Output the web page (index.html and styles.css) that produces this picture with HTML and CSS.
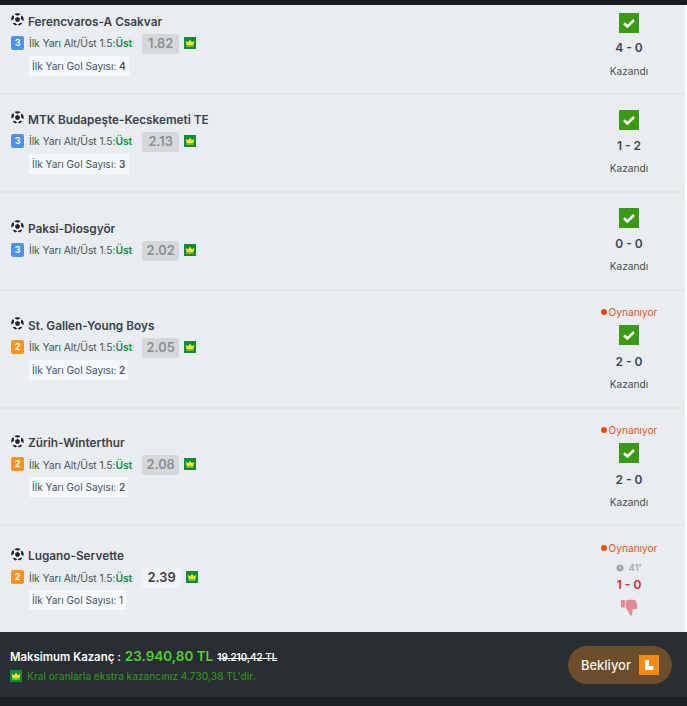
FILE: index.html
```html
<!DOCTYPE html>
<html lang="en">

<head>
  <meta charset="UTF-8">
  <meta name="viewport" content="width=device-width, initial-scale=1.0">
  <title>Kupon</title>
  <link rel="stylesheet" href="styles.css">
</head>

<body>
  <svg class="defs" width="0" height="0">
    <symbol id="ball" viewBox="0 0 24 24">
      <circle cx="12" cy="12" r="11.500" fill="#f4f4f4" />
      <path fill="#1d2024" d="M12 7l4.800 3.500-1.800 5.700H9l-1.800-5.700zM12 .5c-2.400 0-4.300.6-6 1.700L12 5l6-2.800C16.300 1.100 14.400.5 12 .5zM3.500 4.200C1.600 6.200.7 8.400.5 11l.8 3.200 4.400-3.900-.5-5.300zM20.500 4.200l-1.700 1.800-.5 5.300 4.400 3.900.8-3.200c-.2-2.600-1.100-4.800-3-6.800zM7 18l-4 .6c1.400 2.200 3.200 3.700 5.500 4.500l3-2.100zM17 18l-4.500 3 3 2.100c2.300-.8 4.100-2.300 5.500-4.500z" />
    </symbol>
    <symbol id="crown" viewBox="0 0 12 12">
      <rect width="12" height="12" fill="#0d8a3e" />
      <path fill="#f6e32b" d="M2.500 9.500h7v-1h-7zM2.500 8h7l.8-4.200-2.300 1.500L6 2.800 4 5.300 1.700 3.800z" />
    </symbol>
    <symbol id="check" viewBox="0 0 20 20">
      <rect width="20" height="20" fill="#3a9a14" />
      <path fill="none" stroke="#fff" stroke-width="2.600" d="M5 10.200l3.400 3.200L15 7" />
    </symbol>
  </svg>

  <div class="topbar"></div>

  <div class="list">

    <div class="row row-first">
      <div class="match">
        <div class="match-name"><svg class="ball"><use href="#ball" /></svg>Ferencvaros-A Csakvar</div>
        <div class="market">
          <span class="badge badge-blue">3</span>
          <span class="market-text">İlk Yarı Alt/Üst 1.5:<b class="pick">Üst</b></span>
          <span class="odds">1.82</span>
          <svg class="crown"><use href="#crown" /></svg>
        </div>
        <div class="goals">İlk Yarı Gol Sayısı: <b>4</b></div>
      </div>
      <div class="result">
        <svg class="check"><use href="#check" /></svg>
        <div class="score">4 - 0</div>
        <div class="status">Kazandı</div>
      </div>
    </div>

    <div class="row">
      <div class="match">
        <div class="match-name"><svg class="ball"><use href="#ball" /></svg>MTK Budapeşte-Kecskemeti TE</div>
        <div class="market">
          <span class="badge badge-blue">3</span>
          <span class="market-text">İlk Yarı Alt/Üst 1.5:<b class="pick">Üst</b></span>
          <span class="odds">2.13</span>
          <svg class="crown"><use href="#crown" /></svg>
        </div>
        <div class="goals">İlk Yarı Gol Sayısı: <b>3</b></div>
      </div>
      <div class="result">
        <svg class="check"><use href="#check" /></svg>
        <div class="score">1 - 2</div>
        <div class="status">Kazandı</div>
      </div>
    </div>

    <div class="row">
      <div class="match">
        <div class="match-name"><svg class="ball"><use href="#ball" /></svg>Paksi-Diosgyör</div>
        <div class="market">
          <span class="badge badge-blue">3</span>
          <span class="market-text">İlk Yarı Alt/Üst 1.5:<b class="pick">Üst</b></span>
          <span class="odds">2.02</span>
          <svg class="crown"><use href="#crown" /></svg>
        </div>
      </div>
      <div class="result">
        <svg class="check"><use href="#check" /></svg>
        <div class="score">0 - 0</div>
        <div class="status">Kazandı</div>
      </div>
    </div>

    <div class="row row-live">
      <div class="match">
        <div class="match-name"><svg class="ball"><use href="#ball" /></svg>St. Gallen-Young Boys</div>
        <div class="market">
          <span class="badge badge-orange">2</span>
          <span class="market-text">İlk Yarı Alt/Üst 1.5:<b class="pick">Üst</b></span>
          <span class="odds">2.05</span>
          <svg class="crown"><use href="#crown" /></svg>
        </div>
        <div class="goals">İlk Yarı Gol Sayısı: <b>2</b></div>
      </div>
      <div class="result">
        <div class="live"><span class="live-dot"></span>Oynanıyor</div>
        <svg class="check"><use href="#check" /></svg>
        <div class="score">2 - 0</div>
        <div class="status">Kazandı</div>
      </div>
    </div>

    <div class="row row-live row-short">
      <div class="match">
        <div class="match-name"><svg class="ball"><use href="#ball" /></svg>Zürih-Winterthur</div>
        <div class="market">
          <span class="badge badge-orange">2</span>
          <span class="market-text">İlk Yarı Alt/Üst 1.5:<b class="pick">Üst</b></span>
          <span class="odds">2.08</span>
          <svg class="crown"><use href="#crown" /></svg>
        </div>
        <div class="goals">İlk Yarı Gol Sayısı: <b>2</b></div>
      </div>
      <div class="result">
        <div class="live"><span class="live-dot"></span>Oynanıyor</div>
        <svg class="check"><use href="#check" /></svg>
        <div class="score">2 - 0</div>
        <div class="status">Kazandı</div>
      </div>
    </div>

    <div class="row row-last">
      <div class="match">
        <div class="match-name"><svg class="ball"><use href="#ball" /></svg>Lugano-Servette</div>
        <div class="market">
          <span class="badge badge-orange">2</span>
          <span class="market-text">İlk Yarı Alt/Üst 1.5:<b class="pick">Üst</b></span>
          <span class="odds odds-open">2.39</span>
          <svg class="crown"><use href="#crown" /></svg>
        </div>
        <div class="goals goals-open">İlk Yarı Gol Sayısı: 1</div>
      </div>
      <div class="result">
        <div class="live"><span class="live-dot"></span>Oynanıyor</div>
        <div class="minute">
          <svg class="clock" viewBox="0 0 8 8">
            <circle cx="4" cy="4" r="3.500" fill="#a3a6a9" />
            <path d="M4 2v2.300h1.600" fill="none" stroke="#e9edf0" stroke-width=".8" />
          </svg>41'
        </div>
        <div class="score score-losing">1 - 0</div>
        <svg class="thumb" viewBox="0 0 18 18">
          <path fill="#e58a90" d="M1 1h4v7.500H1zM6 1.500C7.500.8 9 .8 10.500.8h3c1.500 0 2.500.8 2.800 2l1 5c.2 1.400-.6 2.400-2 2.400H12.500l-.3 5c-.1 1.400-1.600 2-2.400.6L8 12 6 9z" />
        </svg>
      </div>
    </div>

  </div>

  <div class="footer">
    <div class="totals">
      <div class="max-line">
        <span class="max-label">Maksimum Kazanç :</span>
        <span class="max-value">23.940,80 TL</span>
        <span class="max-old">19.210,42 TL</span>
      </div>
      <div class="king-line">
        <svg class="crown"><use href="#crown" /></svg>
        Kral oranlarla ekstra kazancınız 4.730,38 TL'dir.
      </div>
    </div>
    <div class="pending">
      Bekliyor
      <svg class="pending-icon" viewBox="0 0 20 20">
        <rect width="20" height="20" fill="#f58a12" />
        <path fill="#fff" d="M6 5h4v6h4.500v4H6z" />
      </svg>
    </div>
  </div>
  <div class="bottom-strip"></div>
</body>

</html>
```

FILE: styles.css
```css
body {
  margin: 0;
  background-color: #fff;
  color: #3a4550;
  font-family: Inter, "Liberation Sans", sans-serif;
  overflow: hidden;
}

.defs {
  position: absolute;
}

.topbar {
  height: 5px;
  background-color: #181d21;
}

.list {
  background-color: #e9edf0;
  height: 627px;
  margin-right: 2px;
  overflow: hidden;
}

.row {
  display: flex;
  align-items: center;
  justify-content: space-between;
  height: 96px;
  border-bottom: 2px solid #e2e5e8;
  padding-left: 11px;
}

.row-first {
  height: 80px;
  padding-bottom: 8px;
}

.row-live {
  height: 116px;
}

.row-short {
  height: 115px;
}

.row-last {
  height: 107px;
  border-bottom: none;
}

.match {
  display: flex;
  flex-direction: column;
  align-items: flex-start;
}

.match-name {
  display: flex;
  align-items: center;
  gap: 4px;
  font-size: 11.800px;
  font-weight: 600;
  line-height: 16px;
  color: #38424c;
}

.ball {
  width: 13px;
  height: 13px;
  margin-top: -4px;
}

.market {
  display: flex;
  align-items: center;
  height: 22px;
  margin-top: 3px;
}

.market .crown {
  margin-bottom: 2px;
}

.badge {
  width: 13px;
  height: 14px;
  margin-right: 5px;
  margin-bottom: 2px;
  border-radius: 2px;
  color: #fff;
  font-size: 9px;
  font-weight: 600;
  line-height: 14px;
  text-align: center;
}

.badge-blue {
  background-color: #4d94e8;
}

.badge-orange {
  background-color: #f9951f;
}

.market-text {
  font-size: 10.400px;
  letter-spacing: -0.100px;
  color: #47525c;
}

.pick {
  font-weight: 600;
  color: #0a9355;
}

.odds {
  width: 37px;
  height: 20px;
  margin-left: 10px;
  margin-right: 5px;
  border-radius: 3px;
  background-color: #d5d7d9;
  color: #8a8f95;
  font-size: 12.800px;
  font-weight: 600;
  line-height: 20px;
  text-align: center;
}

.odds-open {
  width: 39px;
  background-color: #f1f3f5;
  color: #3a4048;
}

.crown {
  width: 12px;
  height: 12px;
  flex-shrink: 0;
}

.goals {
  height: 20px;
  margin-top: 1px;
  margin-bottom: 1px;
  margin-left: 18px;
  padding: 0 3px;
  background-color: #f6f9fb;
  font-size: 10.100px;
  line-height: 20px;
  color: #47525c;
}

.goals b {
  font-weight: 600;
}

.result {
  display: flex;
  flex-direction: column;
  align-items: center;
  width: 112px;
  margin-top: -2px;
}

.row-first .result {
  margin-top: 0;
}

.check {
  width: 20px;
  height: 20px;
}

.score {
  margin-top: 8px;
  font-size: 12px;
  font-weight: 600;
  line-height: 16px;
  color: #3a4550;
}

.row-first .score {
  margin-top: 7px;
}

.row-first .status {
  margin-top: 8px;
}

.row-live .score {
  margin-top: 9px;
}

.score-losing {
  margin-top: 2px;
  color: #d81f2a;
}

.status {
  margin-top: 7px;
  font-size: 10.200px;
  line-height: 14px;
  color: #4a4f52;
}

.live {
  display: flex;
  align-items: center;
  gap: 2px;
  margin-bottom: 6px;
  font-size: 10.100px;
  line-height: 14px;
  color: #e8551a;
}

.live-dot {
  width: 6px;
  height: 6px;
  border-radius: 50%;
  background-color: #ee4d0b;
}

.minute {
  display: flex;
  align-items: center;
  gap: 4px;
  font-size: 9.500px;
  font-weight: 600;
  line-height: 14px;
  color: #a9acaf;
}

.clock {
  width: 8px;
  height: 8px;
}

.thumb {
  width: 18px;
  height: 18px;
  margin-top: 6px;
}

.footer {
  display: flex;
  align-items: center;
  justify-content: space-between;
  height: 65px;
  padding: 0 15px 0 10px;
  background-color: #282e32;
}

.max-line {
  display: flex;
  align-items: baseline;
  gap: 4px;
}

.max-label {
  font-size: 11.400px;
  font-weight: 600;
  color: #fff;
}

.max-value {
  font-size: 13.500px;
  font-weight: 600;
  color: #52d02f;
}

.max-old {
  font-size: 9.800px;
  font-weight: 600;
  color: #fff;
  text-decoration: line-through;
}

.king-line {
  display: flex;
  align-items: center;
  gap: 5px;
  margin-top: 6px;
  font-size: 10.100px;
  font-weight: 500;
  color: #2f8f1f;
}

.pending {
  display: flex;
  align-items: center;
  gap: 8px;
  height: 38px;
  padding: 0 13px;
  border-radius: 19px;
  background-color: #6d4e2a;
  color: #f4f1ec;
  font-size: 13px;
  font-weight: 500;
}

.pending-icon {
  width: 20px;
  height: 20px;
}

.bottom-strip {
  height: 9px;
  background-color: #1c2023;
}
```
